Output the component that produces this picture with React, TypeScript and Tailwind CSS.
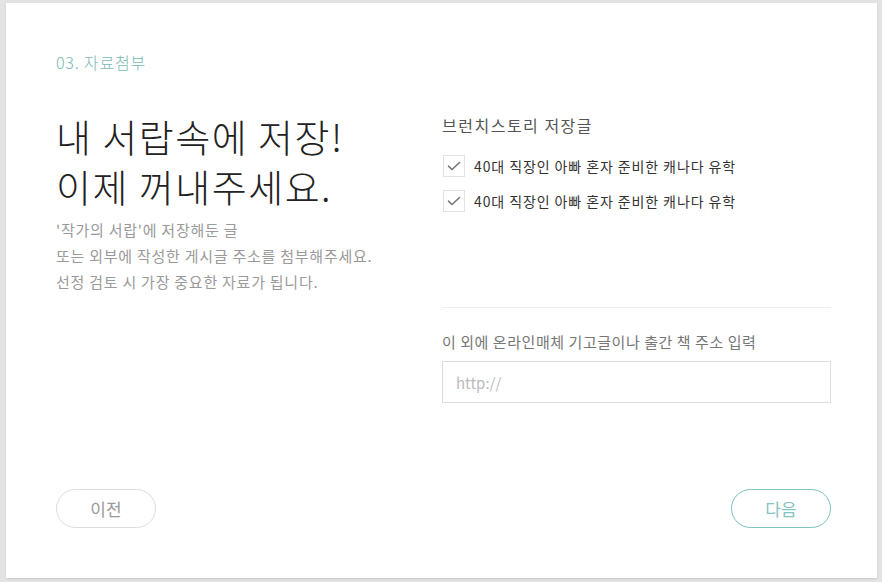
import React, { useState } from 'react';

const posts = [
  { id: 1, title: '40대 직장인 아빠 혼자 준비한 캐나다 유학' },
  { id: 2, title: '40대 직장인 아빠 혼자 준비한 캐나다 유학' },
];

export default function App() {
  const [checked, setChecked] = useState<number[]>([1, 2]);
  const [url, setUrl] = useState('');

  const toggle = (id: number) =>
    setChecked((prev) => (prev.includes(id) ? prev.filter((x) => x !== id) : [...prev, id]));

  return (
    <div
      className="w-[882px] h-[582px] bg-[#e3e3e3] pt-[3px] pl-[6px] pr-[5px] pb-[4px]"
      style={{ fontFamily: '"Noto Sans CJK KR", "Noto Sans", sans-serif' }}
    >
      <div className="w-full h-full bg-white shadow-[0_1px_2px_rgba(0,0,0,0.12)] flex flex-col pl-[50px] pr-[46px] pt-[47px] pb-[50px]">
        {/* Step label */}
        <div className="text-[16px] leading-6 font-light tracking-[0.8px] text-[#78bab3]">03. 자료첨부</div>

        <div className="flex mt-[37px]">
          {/* Left column */}
          <div className="w-[386px] shrink-0">
            <h1 className="text-[38px] leading-[50px] font-light text-[#222] tracking-[1.5px]">
              내 서랍속에 저장!
              <br />
              이제 꺼내주세요.
            </h1>
            <p className="mt-[6px] text-[15px] leading-[26px] tracking-[0.75px] text-[#9a9a9a]">
              '작가의 서랍'에 저장해둔 글
              <br />
              또는 외부에 작성한 게시글 주소를 첨부해주세요.
              <br />
              선정 검토 시 가장 중요한 자료가 됩니다.
            </p>
          </div>

          {/* Right column */}
          <div className="flex-1 pt-[3px]">
            <h2 className="text-[16px] leading-[22px] tracking-[1.5px] text-[#555]">브런치스토리 저장글</h2>
            <ul className="mt-[19px] flex flex-col gap-[13px]">
              {posts.map((p) => (
                <li key={p.id} className="flex items-center gap-[9px]">
                  <button
                    onClick={() => toggle(p.id)}
                    className="w-[22px] h-[22px] ml-px border border-[#e2e2e2] bg-white flex items-center justify-center"
                  >
                    {checked.includes(p.id) && (
                      <svg width="14" height="10" viewBox="0 0 14 10" fill="none">
                        <path d="M1.5 5.2 L5 8.5 L12.5 1.5" stroke="#777" strokeWidth="1.6" strokeLinecap="round" strokeLinejoin="round" />
                      </svg>
                    )}
                  </button>
                  <span className="text-[14px] leading-[22px] tracking-[0.9px] text-[#333]">{p.title}</span>
                </li>
              ))}
            </ul>

            <div className="mt-[95px] border-t border-[#eeeeee]" />

            <label className="block mt-[22px] text-[15px] leading-6 tracking-[0.55px] text-[#777]">
              이 외에 온라인매체 기고글이나 출간 책 주소 입력
            </label>
            <input
              value={url}
              onChange={(e) => setUrl(e.target.value)}
              placeholder="http://"
              className="mt-[7px] w-full h-[42px] border border-[#dddddd] px-[13px] text-[15px] text-[#333] placeholder:text-[#bbbbbb] outline-none"
            />
          </div>
        </div>

        {/* Footer buttons */}
        <div className="mt-auto flex justify-between">
          <button className="w-[100px] h-[39px] rounded-full border border-[#dddddd] text-[17px] text-[#999]">
            이전
          </button>
          <button className="w-[100px] h-[39px] rounded-full border border-[#7cc2bd] text-[17px] text-[#86c4bf]">
            다음
          </button>
        </div>
      </div>
    </div>
  );
}
